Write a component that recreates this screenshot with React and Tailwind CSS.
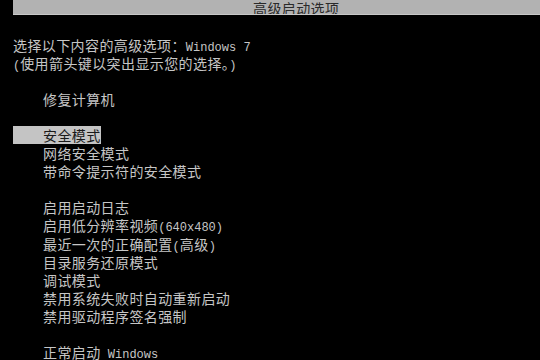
import React from 'react';

const cjk = { fontFamily: '"Noto Sans CJK SC", "Noto Sans", sans-serif' };

// latin bits render in a fixed-width face, half the width of a CJK cell
function M({ children }) {
  return <span className="font-['Liberation_Mono',monospace] text-[12px] tracking-normal">{children}</span>;
}

function Line({ indent, children, selected }) {
  if (selected) {
    return (
      <div className="h-[18.06px] leading-[18.06px] pl-[13px] whitespace-nowrap">
        <div className="inline-block h-full bg-[#c4c4c4] text-[#1a1a1a] pl-[30px]">{children}</div>
      </div>
    );
  }
  return (
    <div className={`h-[18.06px] leading-[18.06px] whitespace-pre ${indent ? 'pl-[43px]' : 'pl-[13px]'}`}>
      {children}
    </div>
  );
}

export default function App() {
  return (
    <div className="w-[540px] h-[360px] bg-black text-[#c6c6c6] overflow-hidden text-[14px] tracking-[0.4px]" style={cjk}>
      <div className="ml-[13px] h-[15px] bg-[#b2b2b2] border-b border-[#c8c8c8] text-[#2a2a2a] leading-[17px] pl-[240px] overflow-hidden">
        高级启动选项
      </div>

      <div className="mt-[21px]">
        <Line>选择以下内容的高级选项：<M>Windows 7</M></Line>
        <Line><M>(</M>使用箭头键以突出显示您的选择。<M>)</M></Line>
        <Line />
        <Line indent>修复计算机</Line>
        <Line />
        <Line selected>安全模式</Line>
        <Line indent>网络安全模式</Line>
        <Line indent>带命令提示符的安全模式</Line>
        <Line />
        <Line indent>启用启动日志</Line>
        <Line indent>启用低分辨率视频<M>(640x480)</M></Line>
        <Line indent>最近一次的正确配置<M>(</M>高级<M>)</M></Line>
        <Line indent>目录服务还原模式</Line>
        <Line indent>调试模式</Line>
        <Line indent>禁用系统失败时自动重新启动</Line>
        <Line indent>禁用驱动程序签名强制</Line>
        <Line />
        <Line indent>正常启动<M>{' Windows'}</M></Line>
      </div>
    </div>
  );
}
